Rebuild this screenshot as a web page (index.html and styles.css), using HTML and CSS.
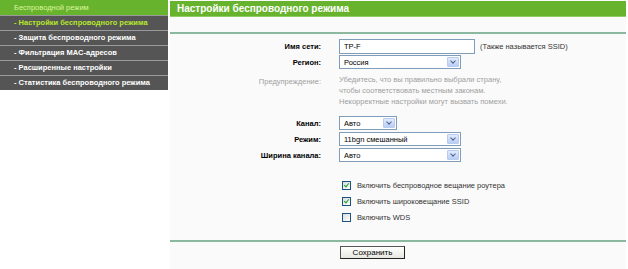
FILE: index.html
```html
<!DOCTYPE html>
<html>
<head>
  <meta charset="UTF-8">
  <title>Настройки беспроводного режима</title>
  <link rel="stylesheet" href="styles.css">
</head>
<body>

<div class="page">
  <!-- Меню слева -->
  <div class="sidebar">
    <div class="side-head">Беспроводной режим</div>
    <div class="side-item active">- Настройки беспроводного режима</div>
    <div class="side-item">- Защита беспроводного режима</div>
    <div class="side-item">- Фильтрация MAC-адресов</div>
    <div class="side-item">- Расширенные настройки</div>
    <div class="side-item">- Статистика беспроводного режима</div>
  </div>

  <!-- Основная часть -->
  <div class="content">
    <div class="title">Настройки беспроводного режима</div>

    <div class="panel">
      <div class="row">
        <label class="lbl">Имя сети:</label>
        <div class="field">
          <input class="text-input" type="text" value="TP-F">
          <span class="hint">(Также называется SSID)</span>
        </div>
      </div>
      <div class="row">
        <label class="lbl">Регион:</label>
        <div class="field">
          <div class="select wide"><span>Россия</span><i class="arrow"></i></div>
        </div>
      </div>
      <div class="row warn">
        <label class="lbl light">Предупреждение:</label>
        <div class="field note">
          Убедитесь, что вы правильно выбрали страну,<br>
          чтобы соответствовать местным законам.<br>
          Некорректные настройки могут вызвать помехи.
        </div>
      </div>

      <div class="group">
        <div class="row">
          <label class="lbl">Канал:</label>
          <div class="field">
            <div class="select narrow"><span>Авто</span><i class="arrow"></i></div>
          </div>
        </div>
        <div class="row">
          <label class="lbl">Режим:</label>
          <div class="field">
            <div class="select wide"><span>11bgn смешанный</span><i class="arrow"></i></div>
          </div>
        </div>
        <div class="row">
          <label class="lbl">Ширина канала:</label>
          <div class="field">
            <div class="select wide"><span>Авто</span><i class="arrow"></i></div>
          </div>
        </div>
      </div>

      <div class="checks">
        <div class="check"><span class="box on"></span>Включить беспроводное вещание роутера</div>
        <div class="check"><span class="box on"></span>Включить широковещание SSID</div>
        <div class="check"><span class="box"></span>Включить WDS</div>
      </div>
    </div>

    <div class="actions">
      <button class="btn" type="button">Сохранить</button>
    </div>
  </div>
</div>

</body>
</html>
```

FILE: styles.css
```css
/* --- BASE --- */
* {
  margin: 0;
  padding: 0;
  box-sizing: border-box;
}
body {
  background: #fff;
  font-family: 'Liberation Sans', Arial, sans-serif;
  font-size: 7.5px;
  color: #000;
}

.page {
  display: flex;
  align-items: flex-start;
  gap: 2px;
  width: 626px;
}

/* --- MENU --- */
.sidebar {
  width: 168px;
  flex: none;
}
.side-head {
  height: 15px;
  line-height: 15px;
  padding-left: 14px;
  background: #67b32e;
  color: #dcf59a;
  font-size: 7.5px;
}
.side-item {
  height: 15px;
  line-height: 14px;
  padding-left: 14px;
  border-top: 1px solid #9a9a9a;
  background: #555;
  color: #fff;
  font-weight: bold;
  font-size: 7.5px;
}
.side-item.active {
  color: #b5e82c;
}

/* --- CONTENT --- */
.content {
  flex: 1;
  background: #fafafa;
  padding-top: 1px;
  min-height: 269px;
}
.title {
  height: 16px;
  line-height: 15px;
  padding-left: 7px;
  background: #67b32e;
  border-bottom: 1px solid #8fcf62;
  color: #fff;
  font-weight: bold;
  font-size: 10px;
}

.panel {
  margin-top: 15px;
  border-top: 2px solid #8db8a0;
  border-bottom: 2px solid #8db8a0;
  padding: 4px 0 15px;
}

.row {
  display: flex;
  align-items: center;
  height: 16px;
}
.lbl {
  width: 169px;
  padding-right: 18px;
  text-align: right;
  font-weight: bold;
  flex: none;
}
.lbl.light {
  font-weight: normal;
  color: #a0a0a0;
}
.field {
  display: flex;
  align-items: center;
  gap: 5px;
}

.text-input {
  width: 136px;
  height: 15px;
  padding: 0 4px;
  border: 1px solid #7f9db9;
  background: #fff;
  font: inherit;
  color: #000;
  outline: none;
}
.hint {
  color: #333;
}

/* выпадающие списки в стиле XP */
.select {
  display: flex;
  align-items: center;
  justify-content: space-between;
  height: 14px;
  padding: 1px 1px 1px 4px;
  border: 1px solid #7f9db9;
  background: #fff;
}
.select.wide { width: 122px; }
.select.narrow { width: 58px; }
.arrow {
  width: 12px;
  height: 10px;
  border: 1px solid #b9cbef;
  border-radius: 1px;
  background: linear-gradient(#e1ebfd, #b9cdf6);
  position: relative;
}
.arrow::after {
  content: "";
  position: absolute;
  left: 3px;
  top: 1px;
  width: 3px;
  height: 3px;
  border-right: 1.5px solid #4d6185;
  border-bottom: 1.5px solid #4d6185;
  transform: rotate(45deg);
}

.warn {
  height: auto;
  align-items: flex-start;
  margin-top: 4px;
}
.warn .lbl {
  line-height: 11px;
  padding-top: 2px;
}
.note {
  display: block;
  color: #a0a0a0;
  line-height: 11px;
}

.group {
  margin-top: 8px;
}

/* --- CASES A COCHER --- */
.checks {
  margin-top: 14px;
  padding-left: 172px;
}
.check {
  display: flex;
  align-items: center;
  gap: 6px;
  height: 16px;
  color: #333;
}
.box {
  width: 9px;
  height: 9px;
  border: 1px solid #1c5180;
  background: linear-gradient(135deg, #dcdcd7, #fff);
  position: relative;
}
.box.on::after {
  content: "";
  position: absolute;
  left: 2px;
  top: 0px;
  width: 2px;
  height: 4px;
  border-right: 1.5px solid #21a121;
  border-bottom: 1.5px solid #21a121;
  transform: rotate(40deg);
}

/* --- BOUTON --- */
.actions {
  padding: 4px 0 0 170px;
}
.btn {
  width: 65px;
  height: 13px;
  border: 1px solid #555;
  border-right-color: #222;
  border-bottom-color: #222;
  background: linear-gradient(#fff, #e6e6e0);
  font-family: 'Liberation Sans', Arial, sans-serif;
  font-size: 8px;
  color: #000;
  line-height: 10px;
}
```
